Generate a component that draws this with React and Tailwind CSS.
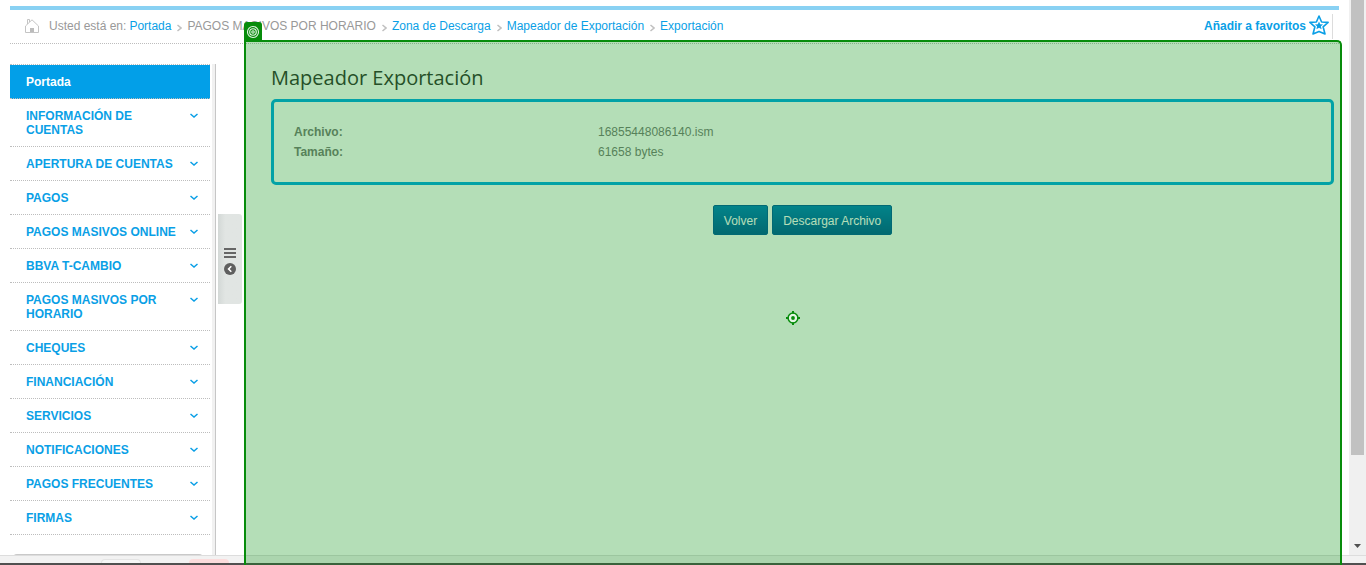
import React from "react";

const crumbs = [
  { label: "Portada", link: true },
  { label: "PAGOS MASIVOS POR HORARIO", link: false },
  { label: "Zona de Descarga", link: true },
  { label: "Mapeador de Exportación", link: true },
  { label: "Exportación", link: true },
];

const menu = [
  "INFORMACIÓN DE CUENTAS",
  "APERTURA DE CUENTAS",
  "PAGOS",
  "PAGOS MASIVOS ONLINE",
  "BBVA T-CAMBIO",
  "PAGOS MASIVOS POR HORARIO",
  "CHEQUES",
  "FINANCIACIÓN",
  "SERVICIOS",
  "NOTIFICACIONES",
  "PAGOS FRECUENTES",
  "FIRMAS",
];

function HomeIcon() {
  return (
    <svg width="14" height="14" viewBox="0 0 14 14" fill="none" stroke="#c4c4c4" aria-hidden="true">
      <path d="M2.500 5V.5h2V3M.5 7 7 .8 13.500 7v6.500H.5z" />
      <path d="M5 9h4v4H5z" fill="#bcbcbc" stroke="none" />
    </svg>
  );
}

function CrumbArrow() {
  return (
    <svg className="mr-[5px] ml-[6px] mt-[3px]" width="5" height="8" viewBox="0 0 5 8" fill="none" stroke="#c0c0c0" strokeWidth="1.5" aria-hidden="true">
      <path d="M.5 1 4 4 .5 7" />
    </svg>
  );
}

function StarIcon() {
  return (
    <svg className="mb-[3px]" width="20" height="20" viewBox="0 0 20 20" fill="none" stroke="#0a9fe6" strokeWidth="1.6" strokeLinejoin="round" aria-hidden="true">
      <path d="M10 1l2.600 6 6.500.4-5 4.400 1.900 7.200-6-2.600L4 19l1.900-7.200-5-4.400 6.500-.4z" />
      <path d="M10 6.600l1.200 2.600 2.900.2-2.200 1.900.7 2.900-2.600-1.500-2.600 1.500.7-2.900-2.200-1.900 2.900-.2z" fill="#0a9fe6" stroke="none" />
    </svg>
  );
}

function Header() {
  return (
    <header className="flex h-[34px] items-center justify-between border-b border-dotted border-[#bdbdbd] pb-px pr-[6px] pl-[15px]">
      <nav aria-label="Ruta" className="flex items-center whitespace-nowrap text-[#999999]">
        <HomeIcon />
        <span className="mr-[3px] ml-[10px]">Usted está en:</span>
        {crumbs.map((c, i) => (
          <React.Fragment key={c.label}>
            {i > 0 && <CrumbArrow />}
            {c.link ? <a href="#" className="text-[#0a9fe6]">{c.label}</a> : <span>{c.label}</span>}
          </React.Fragment>
        ))}
      </nav>
      <a href="#" className="flex h-[25px] items-center gap-[3px] border-r border-[#dcdcdc] pr-[3px] font-bold text-[#0a9fe6]">
        Añadir a favoritos
        <StarIcon />
      </a>
    </header>
  );
}

function Sidebar() {
  return (
    <nav aria-label="Menú" className="w-[200px] shrink-0 border-t border-dotted border-[#bdbdbd] font-bold leading-[14px] text-[#0a9fe6]">
      <a href="#" className="block border-b border-dotted border-[#bdbdbd] bg-[#029fe8] px-4 pt-[10px] pb-[9px] text-white">
        Portada
      </a>
      {menu.map((m) => (
        <a key={m} href="#" className="flex items-start justify-between border-b border-dotted border-[#bdbdbd] pt-[10px] pr-3 pb-[9px] pl-4">
          <span className="w-[152px]">{m}</span>
          <svg className="mt-[4px]" width="8" height="6" viewBox="0 0 8 6" fill="none" stroke="#0a9fe6" strokeWidth="1.5" aria-hidden="true">
            <path d="M.5 1 4 4l3.500-3" />
          </svg>
        </a>
      ))}
      <div className="mr-[7px] ml-[3px] mt-[19px] h-4 rounded-t-sm border-t border-[#c9c9c9]" />
    </nav>
  );
}

function SideToggle() {
  return (
    <div className="mr-[2px] ml-[2px] flex shrink-0 gap-[2px]">
      <div className="w-1 border-r border-[#c6c6c6] bg-[#f1f1f1]" />
      <button aria-label="Contraer menú" className="mt-[150px] flex h-[90px] w-6 flex-col items-center justify-center gap-[5px] rounded-r-[3px] bg-linear-to-r from-[#d3d8d6] to-[#e1e5e3] to-30% pt-[4px]">
        <svg width="12" height="10" viewBox="0 0 12 10" fill="#666666" aria-hidden="true">
          <path d="M0 0h12v2H0zM0 4h12v2H0zM0 8h12v2H0z" />
        </svg>
        <svg width="12" height="12" viewBox="0 0 12 12" aria-hidden="true">
          <circle cx="6" cy="6" r="6" fill="#5f5f5f" />
          <path d="M7.300 3.300 4.600 6l2.700 2.700" fill="none" stroke="#ffffff" strokeWidth="1.600" />
        </svg>
      </button>
    </div>
  );
}

function Content() {
  const button =
    "h-[30px] rounded-[2px] border border-[#00589f] bg-linear-to-b from-[#007dbe] to-[#00589a] px-[10px] pt-px text-white";
  return (
    <main className="min-w-0 flex-1 pr-[5px] pl-[27px]">
      <h1 className="mb-[7px] font-['Open_Sans','Noto_Sans',sans-serif] text-[20px] leading-7 text-[#333333]">Mapeador Exportación</h1>
      <dl className="grid grid-cols-[304px_1fr] rounded-[5px] border-3 border-[#00a9e7] px-5 pt-5 pb-[20px] leading-5 text-[#7a7a7a]">
        <dt className="font-bold">Archivo:</dt>
        <dd>16855448086140.ism</dd>
        <dt className="font-bold">Tamaño:</dt>
        <dd>61658 bytes</dd>
      </dl>
      <div className="mt-5 flex justify-center gap-1">
        <button className={button}>Volver</button>
        <button className={button}>Descargar Archivo</button>
      </div>
    </main>
  );
}

function Scrollbar() {
  return (
    <div aria-hidden="true" className="flex w-[17px] shrink-0 flex-col items-center justify-between bg-[#f0f0f0] pb-[7px]">
      <div className="h-[83%] w-[13px] bg-[#c1c1c1]" />
      <svg width="7" height="4" viewBox="0 0 7 4" fill="#505050">
        <path d="M0 0h7L3.500 4z" />
      </svg>
    </div>
  );
}

function Highlight() {
  return (
    <div aria-hidden="true" className="pointer-events-none absolute top-10 right-6 bottom-0 left-[244px] rounded-tr-[5px] border-x-2 border-t-2 border-[#078c0b] bg-[#06910f]/30">
      <div className="absolute -top-5 -left-[2px] flex h-5 w-[18px] items-center justify-center rounded-t-[3px] bg-[#078c0b]">
        <svg width="14" height="14" viewBox="0 0 14 14" fill="none" stroke="#e6f4e6" strokeWidth="1.100">
          <circle cx="7" cy="7" r="5.500" />
          <circle cx="7" cy="7" r="3.300" />
          <circle cx="7" cy="7" r="1.200" />
        </svg>
      </div>
      <div className="flex h-full items-center justify-center pt-7">
        <svg width="14" height="14" viewBox="0 0 14 14" fill="none" stroke="#078c0b" strokeWidth="1.500">
          <circle cx="7" cy="7" r="4.900" fill="#e4f5e4" />
          <path d="M7 0v2.500M7 11.500V14M0 7h2.500M11.500 7H14" strokeWidth="2" />
          <circle cx="7" cy="7" r="1.900" fill="#078c0b" stroke="none" />
        </svg>
      </div>
    </div>
  );
}

export default function App() {
  return (
    <div className="relative flex h-screen flex-col overflow-hidden bg-white font-['Liberation_Sans',Arial,sans-serif] text-[12px]">
      <div className="flex min-h-0 flex-1">
        <div className="flex min-w-0 flex-1 flex-col overflow-hidden pt-[6px] pr-[10px] pl-[10px]">
          <div className="h-1 shrink-0 bg-[#89d1f3]" />
          <div className="shrink-0">
            <Header />
          </div>
          <div className="mt-5 flex min-h-0 flex-1">
            <Sidebar />
            <SideToggle />
            <Content />
          </div>
        </div>
        <Scrollbar />
      </div>
      <footer className="flex h-[10px] shrink-0 items-end border-t border-b-2 border-t-[#dddddd] border-b-[#505050] bg-[#f2f2f2] pl-[101px]">
        <div className="h-1 w-10 rounded-t-[4px] border-x border-t border-[#e4e4e4] bg-[#f6f6f6]" />
        <div className="ml-12 h-1 w-10 rounded-t-[4px] bg-[#fbdcdc]" />
      </footer>
      <Highlight />
    </div>
  );
}
